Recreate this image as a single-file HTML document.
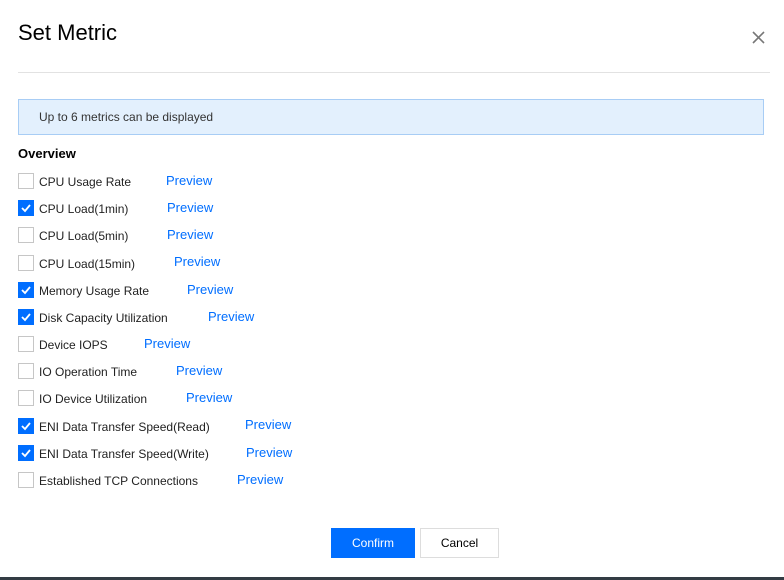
<!DOCTYPE html><html><head><style>
body{margin:0;width:784px;height:580px;background:#fff;font-family:"Liberation Sans",sans-serif;position:relative;overflow:hidden;color:#000}
.a{position:absolute}
.cb{position:absolute;left:18px;width:14px;height:14px;border:1px solid #c6c6c6;background:#fff}
.cb.on{background:#006eff;border-color:#006eff}
.lb{position:absolute;left:39px;font-size:12px;color:#222}
.pv{position:absolute;font-size:13px;color:#006eff}
</style></head><body>
<div class="a" style="left:18px;top:20px;font-size:22px;color:#000">Set Metric</div>
<svg class="a" style="left:752px;top:31px" width="13" height="13"><path d="M1 1L12 12M12 1L1 12" stroke="#777" stroke-width="1.6"/></svg>
<div class="a" style="left:18px;top:72px;width:752px;height:1px;background:#e2e2e2"></div>
<div class="a" style="left:18px;top:99px;width:744px;height:34px;background:#e3f0fd;border:1px solid #a8cdf5"></div>
<div class="a" style="left:39px;top:110px;font-size:12px;color:#333">Up to 6 metrics can be displayed</div>
<div class="a" style="left:18px;top:146px;font-size:13px;font-weight:bold">Overview</div>
<div id="rows"></div>
<script></script>
<div class="a" style="left:331px;top:528px;width:84px;height:30px;background:#006eff;color:#fff;font-size:12px;line-height:30px;text-align:center">Confirm</div>
<div class="a" style="left:420px;top:528px;width:77px;height:28px;border:1px solid #ddd;color:#000;font-size:12px;line-height:28px;text-align:center">Cancel</div>
<div class="a" style="left:0;top:577px;width:784px;height:3px;background:#333c44"></div>

<div class="cb" style="top:173px"></div><div class="lb" style="top:175px">CPU Usage Rate</div><div class="pv" style="left:166px;top:173px">Preview</div>
<div class="cb on" style="top:200px"><svg width="14" height="14"><path d="M3 7l3 3 5-6" stroke="#fff" stroke-width="1.8" fill="none"/></svg></div><div class="lb" style="top:202px">CPU Load(1min)</div><div class="pv" style="left:167px;top:200px">Preview</div>
<div class="cb" style="top:227px"></div><div class="lb" style="top:229px">CPU Load(5min)</div><div class="pv" style="left:167px;top:227px">Preview</div>
<div class="cb" style="top:255px"></div><div class="lb" style="top:257px">CPU Load(15min)</div><div class="pv" style="left:174px;top:254px">Preview</div>
<div class="cb on" style="top:282px"><svg width="14" height="14"><path d="M3 7l3 3 5-6" stroke="#fff" stroke-width="1.8" fill="none"/></svg></div><div class="lb" style="top:284px">Memory Usage Rate</div><div class="pv" style="left:187px;top:282px">Preview</div>
<div class="cb on" style="top:309px"><svg width="14" height="14"><path d="M3 7l3 3 5-6" stroke="#fff" stroke-width="1.8" fill="none"/></svg></div><div class="lb" style="top:311px">Disk Capacity Utilization</div><div class="pv" style="left:208px;top:309px">Preview</div>
<div class="cb" style="top:336px"></div><div class="lb" style="top:338px">Device IOPS</div><div class="pv" style="left:144px;top:336px">Preview</div>
<div class="cb" style="top:363px"></div><div class="lb" style="top:365px">IO Operation Time</div><div class="pv" style="left:176px;top:363px">Preview</div>
<div class="cb" style="top:390px"></div><div class="lb" style="top:392px">IO Device Utilization</div><div class="pv" style="left:186px;top:390px">Preview</div>
<div class="cb on" style="top:418px"><svg width="14" height="14"><path d="M3 7l3 3 5-6" stroke="#fff" stroke-width="1.8" fill="none"/></svg></div><div class="lb" style="top:420px">ENI Data Transfer Speed(Read)</div><div class="pv" style="left:245px;top:417px">Preview</div>
<div class="cb on" style="top:445px"><svg width="14" height="14"><path d="M3 7l3 3 5-6" stroke="#fff" stroke-width="1.8" fill="none"/></svg></div><div class="lb" style="top:447px">ENI Data Transfer Speed(Write)</div><div class="pv" style="left:246px;top:445px">Preview</div>
<div class="cb" style="top:472px"></div><div class="lb" style="top:474px">Established TCP Connections</div><div class="pv" style="left:237px;top:472px">Preview</div>
</body></html>
